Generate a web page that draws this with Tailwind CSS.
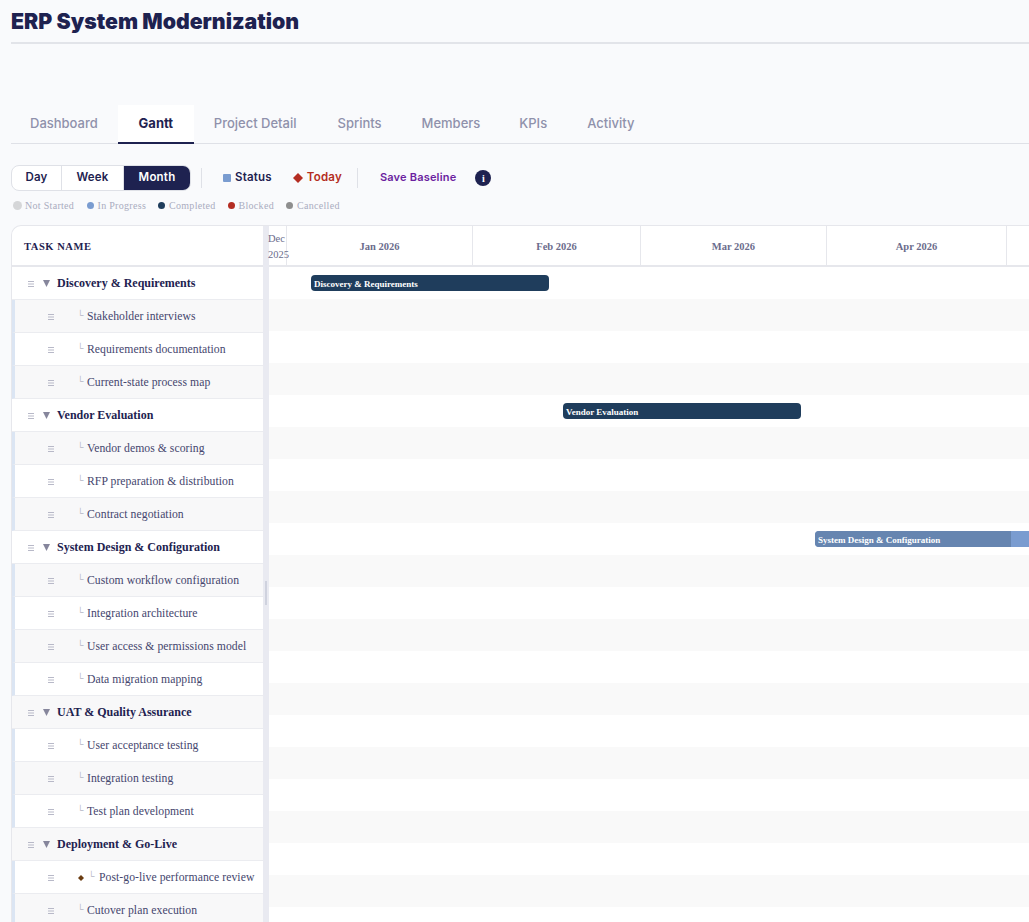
<!DOCTYPE html>
<html lang="en">
<head>
  <meta charset="UTF-8" />
  <title>ERP System Modernization - Gantt</title>
  <script src="https://cdn.jsdelivr.net/npm/@tailwindcss/browser@4"></script>
</head>
<body class="h-[922px] overflow-hidden bg-[#f9fafc] pl-[11px] font-['Inter',sans-serif]">

  <!-- Title -->
  <div class="h-[44px] border-b-2 border-[#e2e4e9] flex items-center pt-[2px]">
    <h1 class="text-[21.3px] leading-none font-black text-[#1e2250]">ERP System Modernization</h1>
  </div>

  <!-- Tabs -->
  <div class="mt-[61px] h-[39px] flex border-b border-[#dfe1e7] text-[13px] font-medium text-[#8f91ab]">
    <div class="px-[19px] flex items-center">Dashboard</div>
    <div class="ml-[1px] w-[76px] flex items-center justify-center bg-white border-b-2 border-[#1e2250] font-bold text-[#1e2250] h-[39px]">Gantt</div>
    <div class="pl-5 pr-[21px] flex items-center">Project Detail</div>
    <div class="px-5 flex items-center">Sprints</div>
    <div class="pl-5 pr-[19px] flex items-center">Members</div>
    <div class="px-5 flex items-center">KPIs</div>
    <div class="px-5 flex items-center">Activity</div>
  </div>

  <!-- Toolbar -->
  <div class="mt-[21px] h-[26px] flex items-center text-[11.5px] font-semibold tracking-[0.2px] text-[#1e2250]">
    <div class="flex h-[26px] w-[180px] bg-white border border-[#dfe1e7] rounded-lg overflow-hidden">
      <div class="w-[50px] flex items-center justify-center border-r border-[#dfe1e7]">Day</div>
      <div class="w-[62px] flex items-center justify-center border-r border-[#dfe1e7]">Week</div>
      <div class="flex-1 flex items-center justify-center bg-[#1e2250] text-white">Month</div>
    </div>
    <div class="ml-[10px] w-px h-[20px] bg-[#dfe1e7]"></div>
    <div class="ml-[21px] w-2 h-2 bg-[#7a9cd0] rounded-[1px]"></div>
    <div class="ml-1">Status</div>
    <svg class="ml-[21px]" width="10" height="10" viewBox="0 0 10 10"><path d="M5 0 10 5 5 10 0 5z" fill="#b42d22"/></svg>
    <div class="ml-1 text-[#b42d22]">Today</div>
    <div class="ml-[15px] w-px h-[20px] bg-[#dfe1e7]"></div>
    <div class="ml-[22px] pb-[1px] text-[11px] text-[#6b1fa0]">Save Baseline</div>
    <div class="ml-[19px] w-4 h-4 rounded-full bg-[#1e2250] text-white flex items-center justify-center text-[10px] font-bold font-['Liberation_Serif',serif]">i</div>
  </div>

  <!-- Legend -->
  <div class="mt-[7px] h-[14px] flex items-center pl-[2px] text-[10px] text-[#a9acc0] font-['Liberation_Serif',serif] tracking-[0.3px] whitespace-nowrap">
    <div class="w-[9px] h-[9px] rounded-full bg-[#d5d6d8]"></div><div class="ml-[3px] w-[50px]">Not Started</div>
    <div class="ml-[12px] w-[7px] h-[7px] rounded-full bg-[#7a9cd0]"></div><div class="ml-[3.5px] w-[48px]">In Progress</div>
    <div class="ml-[12.5px] w-[7px] h-[7px] rounded-full bg-[#1f3d5c]"></div><div class="ml-1 w-[46px]">Completed</div>
    <div class="ml-[13px] w-[7px] h-[7px] rounded-full bg-[#b42d22]"></div><div class="ml-[3.5px] w-[34.5px]">Blocked</div>
    <div class="ml-[13px] w-[7px] h-[7px] rounded-full bg-[#8e8e8e]"></div><div class="ml-1">Cancelled</div>
  </div>

  <!-- Gantt -->
  <div class="mt-[13px] flex h-[697px] bg-white border-t border-l border-[#e6e7ec] rounded-tl-[10px] overflow-hidden font-['Liberation_Serif',serif]">

    <!-- Task list -->
    <div class="w-[251px] shrink-0">
      <div class="h-[41px] flex items-center pl-3 pt-[3px] border-b-2 border-[#e6e7ec] text-[10.5px] font-bold tracking-[0.55px] text-[#1e2250]">TASK NAME</div>

      <div class="h-[33px] flex items-center border-b border-[#ebecf0] pl-4 text-[12px] font-bold text-[#1e2250]"><div class="w-[15px]"><svg class="mt-[1px]" width="6" height="6" viewBox="0 0 6 6"><path d="M0 .5H6M0 3H6M0 5.5H6" stroke="#b8b9c8"/></svg></div><svg width="7" height="7" viewBox="0 0 7 7"><path d="M0 0H7L3.5 7z" fill="#86869c"/></svg><div class="ml-[7px]">Discovery &amp; Requirements</div></div>
      <div class="h-[33px] flex items-center border-b border-[#ebecf0] border-l-[3px] border-l-[#dbe5f3] bg-[#f8f8f9] pl-[33px] pt-[2px] text-[11.7px] tracking-[0.05px] text-[#45466e]"><div class="w-[29px]"><svg width="6" height="6" viewBox="0 0 6 6"><path d="M0 .5H6M0 3H6M0 5.5H6" stroke="#b8b9c8"/></svg></div><div class="w-[10px] pb-[3px] text-[#b5b6c6] text-[9px]">└</div>Stakeholder interviews</div>
      <div class="h-[33px] flex items-center border-b border-[#ebecf0] border-l-[3px] border-l-[#dbe5f3] pl-[33px] pt-[2px] text-[11.7px] tracking-[0.05px] text-[#45466e]"><div class="w-[29px]"><svg width="6" height="6" viewBox="0 0 6 6"><path d="M0 .5H6M0 3H6M0 5.5H6" stroke="#b8b9c8"/></svg></div><div class="w-[10px] pb-[3px] text-[#b5b6c6] text-[9px]">└</div>Requirements documentation</div>
      <div class="h-[33px] flex items-center border-b border-[#ebecf0] border-l-[3px] border-l-[#dbe5f3] bg-[#f8f8f9] pl-[33px] pt-[2px] text-[11.7px] tracking-[0.05px] text-[#45466e]"><div class="w-[29px]"><svg width="6" height="6" viewBox="0 0 6 6"><path d="M0 .5H6M0 3H6M0 5.5H6" stroke="#b8b9c8"/></svg></div><div class="w-[10px] pb-[3px] text-[#b5b6c6] text-[9px]">└</div>Current-state process map</div>

      <div class="h-[33px] flex items-center border-b border-[#ebecf0] pl-4 text-[12px] font-bold text-[#1e2250]"><div class="w-[15px]"><svg class="mt-[1px]" width="6" height="6" viewBox="0 0 6 6"><path d="M0 .5H6M0 3H6M0 5.5H6" stroke="#b8b9c8"/></svg></div><svg width="7" height="7" viewBox="0 0 7 7"><path d="M0 0H7L3.5 7z" fill="#86869c"/></svg><div class="ml-[7px]">Vendor Evaluation</div></div>
      <div class="h-[33px] flex items-center border-b border-[#ebecf0] border-l-[3px] border-l-[#dbe5f3] bg-[#f8f8f9] pl-[33px] pt-[2px] text-[11.7px] tracking-[0.05px] text-[#45466e]"><div class="w-[29px]"><svg width="6" height="6" viewBox="0 0 6 6"><path d="M0 .5H6M0 3H6M0 5.5H6" stroke="#b8b9c8"/></svg></div><div class="w-[10px] pb-[3px] text-[#b5b6c6] text-[9px]">└</div>Vendor demos &amp; scoring</div>
      <div class="h-[33px] flex items-center border-b border-[#ebecf0] border-l-[3px] border-l-[#dbe5f3] pl-[33px] pt-[2px] text-[11.7px] tracking-[0.05px] text-[#45466e]"><div class="w-[29px]"><svg width="6" height="6" viewBox="0 0 6 6"><path d="M0 .5H6M0 3H6M0 5.5H6" stroke="#b8b9c8"/></svg></div><div class="w-[10px] pb-[3px] text-[#b5b6c6] text-[9px]">└</div>RFP preparation &amp; distribution</div>
      <div class="h-[33px] flex items-center border-b border-[#ebecf0] border-l-[3px] border-l-[#dbe5f3] bg-[#f8f8f9] pl-[33px] pt-[2px] text-[11.7px] tracking-[0.05px] text-[#45466e]"><div class="w-[29px]"><svg width="6" height="6" viewBox="0 0 6 6"><path d="M0 .5H6M0 3H6M0 5.5H6" stroke="#b8b9c8"/></svg></div><div class="w-[10px] pb-[3px] text-[#b5b6c6] text-[9px]">└</div>Contract negotiation</div>

      <div class="h-[33px] flex items-center border-b border-[#ebecf0] pl-4 text-[12px] font-bold text-[#1e2250]"><div class="w-[15px]"><svg class="mt-[1px]" width="6" height="6" viewBox="0 0 6 6"><path d="M0 .5H6M0 3H6M0 5.5H6" stroke="#b8b9c8"/></svg></div><svg width="7" height="7" viewBox="0 0 7 7"><path d="M0 0H7L3.5 7z" fill="#86869c"/></svg><div class="ml-[7px]">System Design &amp; Configuration</div></div>
      <div class="h-[33px] flex items-center border-b border-[#ebecf0] border-l-[3px] border-l-[#dbe5f3] bg-[#f8f8f9] pl-[33px] pt-[2px] text-[11.7px] tracking-[0.05px] text-[#45466e]"><div class="w-[29px]"><svg width="6" height="6" viewBox="0 0 6 6"><path d="M0 .5H6M0 3H6M0 5.5H6" stroke="#b8b9c8"/></svg></div><div class="w-[10px] pb-[3px] text-[#b5b6c6] text-[9px]">└</div>Custom workflow configuration</div>
      <div class="h-[33px] flex items-center border-b border-[#ebecf0] border-l-[3px] border-l-[#dbe5f3] pl-[33px] pt-[2px] text-[11.7px] tracking-[0.05px] text-[#45466e]"><div class="w-[29px]"><svg width="6" height="6" viewBox="0 0 6 6"><path d="M0 .5H6M0 3H6M0 5.5H6" stroke="#b8b9c8"/></svg></div><div class="w-[10px] pb-[3px] text-[#b5b6c6] text-[9px]">└</div>Integration architecture</div>
      <div class="h-[33px] flex items-center border-b border-[#ebecf0] border-l-[3px] border-l-[#dbe5f3] bg-[#f8f8f9] pl-[33px] pt-[2px] text-[11.7px] tracking-[0.05px] text-[#45466e]"><div class="w-[29px]"><svg width="6" height="6" viewBox="0 0 6 6"><path d="M0 .5H6M0 3H6M0 5.5H6" stroke="#b8b9c8"/></svg></div><div class="w-[10px] pb-[3px] text-[#b5b6c6] text-[9px]">└</div>User access &amp; permissions model</div>
      <div class="h-[33px] flex items-center border-b border-[#ebecf0] border-l-[3px] border-l-[#dbe5f3] pl-[33px] pt-[2px] text-[11.7px] tracking-[0.05px] text-[#45466e]"><div class="w-[29px]"><svg width="6" height="6" viewBox="0 0 6 6"><path d="M0 .5H6M0 3H6M0 5.5H6" stroke="#b8b9c8"/></svg></div><div class="w-[10px] pb-[3px] text-[#b5b6c6] text-[9px]">└</div>Data migration mapping</div>

      <div class="h-[33px] flex items-center border-b border-[#ebecf0] bg-[#f8f8f9] pl-4 text-[12px] font-bold text-[#1e2250]"><div class="w-[15px]"><svg class="mt-[1px]" width="6" height="6" viewBox="0 0 6 6"><path d="M0 .5H6M0 3H6M0 5.5H6" stroke="#b8b9c8"/></svg></div><svg width="7" height="7" viewBox="0 0 7 7"><path d="M0 0H7L3.5 7z" fill="#86869c"/></svg><div class="ml-[7px]">UAT &amp; Quality Assurance</div></div>
      <div class="h-[33px] flex items-center border-b border-[#ebecf0] border-l-[3px] border-l-[#dbe5f3] pl-[33px] pt-[2px] text-[11.7px] tracking-[0.05px] text-[#45466e]"><div class="w-[29px]"><svg width="6" height="6" viewBox="0 0 6 6"><path d="M0 .5H6M0 3H6M0 5.5H6" stroke="#b8b9c8"/></svg></div><div class="w-[10px] pb-[3px] text-[#b5b6c6] text-[9px]">└</div>User acceptance testing</div>
      <div class="h-[33px] flex items-center border-b border-[#ebecf0] border-l-[3px] border-l-[#dbe5f3] bg-[#f8f8f9] pl-[33px] pt-[2px] text-[11.7px] tracking-[0.05px] text-[#45466e]"><div class="w-[29px]"><svg width="6" height="6" viewBox="0 0 6 6"><path d="M0 .5H6M0 3H6M0 5.5H6" stroke="#b8b9c8"/></svg></div><div class="w-[10px] pb-[3px] text-[#b5b6c6] text-[9px]">└</div>Integration testing</div>
      <div class="h-[33px] flex items-center border-b border-[#ebecf0] border-l-[3px] border-l-[#dbe5f3] pl-[33px] pt-[2px] text-[11.7px] tracking-[0.05px] text-[#45466e]"><div class="w-[29px]"><svg width="6" height="6" viewBox="0 0 6 6"><path d="M0 .5H6M0 3H6M0 5.5H6" stroke="#b8b9c8"/></svg></div><div class="w-[10px] pb-[3px] text-[#b5b6c6] text-[9px]">└</div>Test plan development</div>

      <div class="h-[33px] flex items-center border-b border-[#ebecf0] bg-[#f8f8f9] pl-4 text-[12px] font-bold text-[#1e2250]"><div class="w-[15px]"><svg class="mt-[1px]" width="6" height="6" viewBox="0 0 6 6"><path d="M0 .5H6M0 3H6M0 5.5H6" stroke="#b8b9c8"/></svg></div><svg width="7" height="7" viewBox="0 0 7 7"><path d="M0 0H7L3.5 7z" fill="#86869c"/></svg><div class="ml-[7px]">Deployment &amp; Go-Live</div></div>
      <div class="h-[33px] flex items-center border-b border-[#ebecf0] border-l-[3px] border-l-[#dbe5f3] pl-[33px] pt-[2px] text-[11.7px] tracking-[0.05px] text-[#45466e]"><div class="w-[30px]"><svg width="6" height="6" viewBox="0 0 6 6"><path d="M0 .5H6M0 3H6M0 5.5H6" stroke="#b8b9c8"/></svg></div><svg width="6" height="6" viewBox="0 0 6 6"><path d="M3 0 6 3 3 6 0 3z" fill="#6b3d12"/></svg><div class="ml-1 w-[11px] pb-[3px] text-[#b5b6c6] text-[9px]">└</div>Post-go-live performance review</div>
      <div class="h-[33px] flex items-center border-b border-[#ebecf0] border-l-[3px] border-l-[#dbe5f3] bg-[#f8f8f9] pl-[33px] pt-[2px] text-[11.7px] tracking-[0.05px] text-[#45466e]"><div class="w-[29px]"><svg width="6" height="6" viewBox="0 0 6 6"><path d="M0 .5H6M0 3H6M0 5.5H6" stroke="#b8b9c8"/></svg></div><div class="w-[10px] pb-[3px] text-[#b5b6c6] text-[9px]">└</div>Cutover plan execution</div>
    </div>

    <!-- Splitter -->
    <div class="w-[6px] shrink-0 bg-[#e9eaf1] flex justify-center pt-[355px]">
      <div class="w-[2px] h-[24px] bg-[#cfd2de]"></div>
    </div>

    <!-- Timeline -->
    <div class="flex-1 min-w-0">
      <div class="h-[41px] flex border-b-2 border-[#e6e7ec] text-[10.5px] font-bold text-[#6b6c8c] bg-white">
        <div class="w-[18px] shrink-0 border-r border-[#e6e7ec] text-[10.5px] font-normal leading-[16px] pt-[5px] whitespace-pre -ml-[2px] pl-[1px] box-content">Dec
2025</div>
        <div class="w-[186px] shrink-0 flex items-center justify-center pt-[3px] border-r border-[#e6e7ec]">Jan 2026</div>
        <div class="w-[168px] shrink-0 flex items-center justify-center pt-[3px] border-r border-[#e6e7ec]">Feb 2026</div>
        <div class="w-[186px] shrink-0 flex items-center justify-center pt-[3px] border-r border-[#e6e7ec]">Mar 2026</div>
        <div class="w-[180px] shrink-0 flex items-center justify-center pt-[3px] border-r border-[#e6e7ec]">Apr 2026</div>
      </div>
      <div class="h-[32px] pt-2 pl-[42px]"><div class="w-[238px] h-4 bg-[#1f3d5c] rounded-[4px] pl-[3px] text-[9px] leading-[18px] font-bold text-white">Discovery &amp; Requirements</div></div>
      <div class="h-[32px] bg-[#f9f9f9]"></div>
      <div class="h-[32px]"></div>
      <div class="h-[32px] bg-[#f9f9f9]"></div>
      <div class="h-[32px] pt-2 pl-[294px]"><div class="w-[238px] h-4 bg-[#1f3d5c] rounded-[4px] pl-[3px] text-[9px] leading-[18px] font-bold text-white">Vendor Evaluation</div></div>
      <div class="h-[32px] bg-[#f9f9f9]"></div>
      <div class="h-[32px]"></div>
      <div class="h-[32px] bg-[#f9f9f9]"></div>
      <div class="h-[32px] pt-2 pl-[546px]"><div class="w-[300px] h-4 bg-[#7a9cd0] rounded-[4px] overflow-hidden text-[9px] leading-[18px] font-bold text-white"><div class="w-[196px] h-4 bg-[#6685b0] pl-[3px]">System Design &amp; Configuration</div></div></div>
      <div class="h-[32px] bg-[#f9f9f9]"></div>
      <div class="h-[32px]"></div>
      <div class="h-[32px] bg-[#f9f9f9]"></div>
      <div class="h-[32px]"></div>
      <div class="h-[32px] bg-[#f9f9f9]"></div>
      <div class="h-[32px]"></div>
      <div class="h-[32px] bg-[#f9f9f9]"></div>
      <div class="h-[32px]"></div>
      <div class="h-[32px] bg-[#f9f9f9]"></div>
      <div class="h-[32px]"></div>
      <div class="h-[32px] bg-[#f9f9f9]"></div>
      <div class="h-[32px]"></div>
    </div>
  </div>
</body>
</html>
